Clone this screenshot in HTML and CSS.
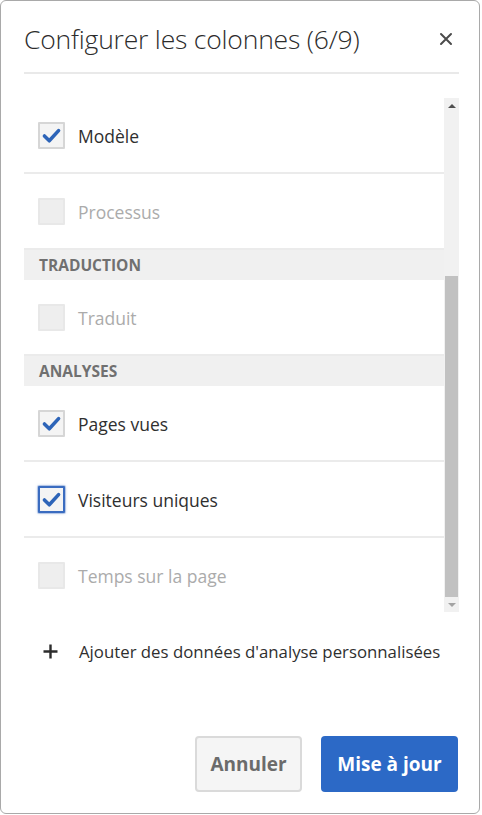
FILE: index.html
```html
<!DOCTYPE html>
<html lang="fr">
<head>
<meta charset="utf-8">
<title>Configurer les colonnes</title>
<link rel="stylesheet" href="styles.css">
</head>
<body>
<div class="dialog">
  <header class="dlg-header">
    <h1 class="dlg-title">Configurer les colonnes (6/9)</h1>
    <button class="close" aria-label="Fermer">
      <svg width="14" height="14" viewBox="0 0 14 14"><path d="M2 2 L12 12 M12 2 L2 12" stroke="#4b4b4b" stroke-width="2" stroke-linecap="round"/></svg>
    </button>
  </header>

  <div class="list-wrap">
    <div class="list">
      <div class="list-inner">
        <label class="row">
          <span class="cb checked"><svg viewBox="0 0 26 26" width="26" height="26"><path d="M5 13.5 L10.5 19 L21 7.5" fill="none" stroke="#2d64b8" stroke-width="4" stroke-linecap="round" stroke-linejoin="round"/></svg></span>
          <span class="lbl">Modèle</span>
        </label>
        <label class="row disabled">
          <span class="cb"></span>
          <span class="lbl">Processus</span>
        </label>
        <div class="section">Traduction</div>
        <label class="row disabled">
          <span class="cb"></span>
          <span class="lbl">Traduit</span>
        </label>
        <div class="section">Analyses</div>
        <label class="row">
          <span class="cb checked"><svg viewBox="0 0 26 26" width="26" height="26"><path d="M5 13.5 L10.5 19 L21 7.5" fill="none" stroke="#2d64b8" stroke-width="4" stroke-linecap="round" stroke-linejoin="round"/></svg></span>
          <span class="lbl">Pages vues</span>
        </label>
        <label class="row">
          <span class="cb checked focus"><svg viewBox="0 0 26 26" width="26" height="26"><path d="M5 13.5 L10.5 19 L21 7.5" fill="none" stroke="#2d64b8" stroke-width="4" stroke-linecap="round" stroke-linejoin="round"/></svg></span>
          <span class="lbl">Visiteurs uniques</span>
        </label>
        <label class="row disabled">
          <span class="cb"></span>
          <span class="lbl">Temps sur la page</span>
        </label>
      </div>
    </div>
    <div class="scrollbar">
      <span class="arrow up"></span>
      <div class="track"><div class="thumb"></div></div>
      <span class="arrow down"></span>
    </div>
  </div>

  <div class="add-row">
    <svg class="plus" width="15" height="15" viewBox="0 0 15 15"><path d="M7.5 0.5 V14.5 M0.5 7.5 H14.5" stroke="#2c2c2c" stroke-width="2.4"/></svg>
    <span>Ajouter des données d'analyse personnalisées</span>
  </div>

  <footer class="dlg-footer">
    <button class="btn secondary">Annuler</button>
    <button class="btn primary">Mise à jour</button>
  </footer>
</div>
</body>
</html>
```

FILE: styles.css
```css
html, body {
  margin: 0;
  padding: 0;
  background: #ffffff;
}

body {
  font-family: "Open Sans", "Noto Sans", sans-serif;
  color: #323232;
}

.dialog {
  box-sizing: border-box;
  width: 480px;
  height: 814px;
  border: 1px solid #a9a9a9;
  border-radius: 6px;
  background: #fff;
  padding: 0 20px 0 23px;
  display: flex;
  flex-direction: column;
}

.dlg-header {
  height: 73px;
  border-bottom: 2px solid #e9e9e9;
  display: flex;
  align-items: center;
  justify-content: space-between;
  box-sizing: border-box;
  padding-top: 4px;
}

.dlg-title {
  margin: 0;
  font-weight: 300;
  font-size: 26.5px;
  letter-spacing: -0.2px;
  color: #2c2c2c;
}

.close {
  border: 0;
  background: transparent;
  padding: 0;
  margin-right: 6px;
  width: 14px;
  height: 14px;
  display: flex;
}

.list-wrap {
  margin-top: 24px;
  height: 514px;
  display: flex;
}

.list {
  flex: 1;
  overflow: hidden;
}

.row {
  border-bottom: 2px solid #ebebeb;
  display: flex;
  align-items: center;
  padding-left: 14px;
  padding-top: 1px;
  gap: 13px;
  box-sizing: border-box;
  height: 76px;
}

.cb {
  box-sizing: border-box;
  width: 27px;
  height: 27px;
  border: 2px solid #d6d6d6;
  background: #f4f4f4;
  border-radius: 1px;
  display: flex;
  align-items: center;
  justify-content: center;
}

.cb svg {
  width: 23px;
  height: 23px;
}

.cb.focus {
  border-color: #3a6cc0;
  box-shadow: 0 0 0 1px rgba(58, 108, 192, 0.25), 0 0 3px rgba(58, 108, 192, 0.5);
}

.lbl {
  font-size: 17.5px;
  color: #2f2f2f;
  padding-top: 1px;
}

.row.disabled .cb {
  background: #eeeeee;
  border-color: #e8e8e8;
}

.row.disabled .lbl {
  color: #ababab;
}

.section {
  height: 30px;
  background: #f0f0f0;
  display: flex;
  align-items: center;
  padding-left: 15px;
  text-transform: uppercase;
  font-weight: 700;
  font-size: 15.5px;
  color: #707070;
}

.scrollbar {
  width: 15px;
  background: #f1f1f1;
  display: flex;
  flex-direction: column;
  align-items: center;
}

.arrow {
  width: 0;
  height: 0;
  border-left: 4px solid transparent;
  border-right: 4px solid transparent;
}

.arrow.up {
  margin-top: 6px;
  border-bottom: 4px solid #505050;
}

.arrow.down {
  margin-bottom: 5px;
  border-top: 4px solid #a3a3a3;
}

.track {
  flex: 1;
  width: 100%;
  display: flex;
  flex-direction: column;
  justify-content: flex-end;
  padding: 0 1px 6px;
  box-sizing: border-box;
}

.thumb {
  height: 321px;
  background: #c1c1c1;
}

.add-row {
  display: flex;
  align-items: center;
  height: 40px;
  margin-top: 19px;
  padding-left: 19px;
  font-size: 16.8px;
  color: #2f2f2f;
}

.plus {
  margin-right: 21px;
}

.dlg-footer {
  margin-top: auto;
  padding-bottom: 21px;
  display: flex;
  justify-content: flex-end;
  gap: 19px;
  padding-right: 1px;
}

.btn {
  height: 56px;
  border-radius: 4px;
  font-family: "Open Sans", "Noto Sans", sans-serif;
  font-weight: 700;
  font-size: 19px;
  padding: 0;
  box-sizing: border-box;
}

.btn.secondary {
  width: 107px;
  background: #f5f5f5;
  border: 2px solid #dadada;
  color: #6b6b6b;
}

.btn.primary {
  width: 137px;
  background: #2c69c6;
  border: 0;
  color: #ffffff;
}
```
